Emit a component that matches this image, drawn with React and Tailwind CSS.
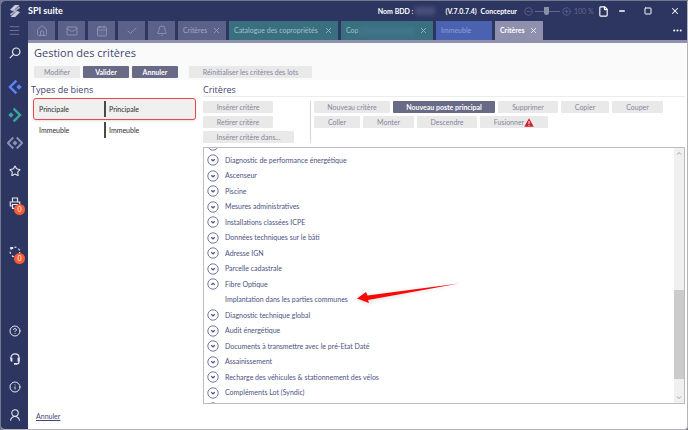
import React from 'react';
import { Home, Mail, CalendarDays, Check, Bell, X, Menu, Star, CircleHelp, Info, File, Minus, Square, Ellipsis, CircleMinus, CirclePlus } from 'lucide-react';
import clsx from 'clsx';

const shortcuts = [
  { label: 'Accueil', Icon: Home },
  { label: 'Messages', Icon: Mail },
  { label: 'Agenda', Icon: CalendarDays },
  { label: 'Tâches', Icon: Check },
  { label: 'Notifications', Icon: Bell },
];

const tabs = [
  { label: 'Critères', className: 'w-12 bg-[#5b6189] text-[#a3a6c2]', closable: true },
  { label: 'Catalogue des copropriétés', className: 'w-[109px] bg-[#3a6f80] text-[#9fc3cb]', closable: true },
  { label: 'Cop', className: 'w-[92px] bg-[#3a6f80] text-[#9fc3cb]', closable: true, masked: true },
  { label: 'Immeuble', className: 'w-14 bg-[#4a62b0] text-[#8fa0dc]' },
  { label: 'Critères', className: 'w-12 bg-[#8f90ae] text-white font-bold', closable: true },
];

const criteria = [
  'Diagnostics techniques',
  'Diagnostic de performance énergétique',
  'Ascenseur',
  'Piscine',
  'Mesures administratives',
  'Installations classées ICPE',
  'Données techniques sur le bâti',
  'Adresse IGN',
  'Parcelle cadastrale',
  'Fibre Optique',
  'Implantation dans les parties communes',
  'Diagnostic technique global',
  'Audit énergétique',
  'Documents à transmettre avec le pré-Etat Daté',
  'Assainissement',
  'Recharge des véhicules & stationnement des vélos',
  'Compléments Lot (Syndic)',
  '',
];

const Logo = () => (
  <svg viewBox="0 0 12 12" className="h-3 w-3" fill="#c9cbdc">
    <path d="M5.800 0H10.500L5 5H.8Z" />
    <path d="M9.900 1.300 11.200 2.900 5.200 6.800 1.200 5.200 6.500 4.200Z" opacity=".8" />
    <path d="M2.100 10.700.8 9.100 6.800 5.200 10.800 6.800 5.500 7.800Z" opacity=".8" />
    <path d="M6.200 12H1.500L7 7h4.200Z" />
  </svg>
);

const PaneIcon = ({ variant }) => (
  <svg viewBox="0 0 16 16" className="h-4 w-4" fill="none" strokeWidth="2.400">
    {variant === 'left' && (
      <g stroke="#5b86f5">
        <path d="M9.400 1.600 3 8l6.400 6.400" />
        <path d="M12 5.300 14.700 8 12 10.700 9.300 8Z" fill="#5b86f5" stroke="none" />
      </g>
    )}
    {variant === 'right' && (
      <g stroke="#38a89a">
        <path d="M6.600 1.600 13 8l-6.400 6.400" />
        <path d="M4 5.300 6.700 8 4 10.700 1.300 8Z" fill="#38a89a" stroke="none" />
      </g>
    )}
    {variant === 'both' && (
      <g stroke="#8d92b4">
        <path d="M6.300 2.500.9 8l5.400 5.500M9.700 2.500 15.100 8l-5.400 5.500" strokeWidth="1.900" />
        <path d="M8 5.500 10.500 8 8 10.500 5.500 8Z" fill="#8d92b4" stroke="none" />
      </g>
    )}
  </svg>
);

const SearchIcon = () => (
  <svg viewBox="0 0 12 12" className="h-3 w-3" fill="none" stroke="currentColor" strokeWidth="1.200">
    <circle cx="7.200" cy="4.700" r="3.700" />
    <path d="M4.500 7.400.8 11.200" />
  </svg>
);

const PrinterIcon = () => (
  <svg viewBox="0 0 12 12" className="h-3 w-3" fill="none" stroke="currentColor" strokeWidth="1.200">
    <path d="M3.500 5V1h5v4M3.500 9H1.300V5h9.400v4H8.500" />
    <path d="M3.500 7.500h5v3.800h-5Z" />
  </svg>
);

const HeadsetIcon = () => (
  <svg viewBox="0 0 12 12" className="h-3 w-3" fill="none" stroke="currentColor" strokeWidth="1.200">
    <path d="M2 6V4.600C2 2.300 3.800.9 6 .9s4 1.400 4 3.700V9c0 1.200-.8 1.900-2.200 1.900" />
    <path d="M1.400 4.800h2v4h-.8C1.900 8.800 1.400 8.300 1.400 7.600ZM8.600 4.800h2v2.800c0 .7-.5 1.200-1.200 1.200H8.600ZM5 10h3v1.700H5Z" fill="currentColor" stroke="none" />
  </svg>
);

const SideButton = ({ label, badge, children }) => (
  <button type="button" aria-label={label} className="relative flex h-7 w-full shrink-0 items-center justify-center text-[#e6e7ef]">
    {children}
    {badge !== undefined && (
      <span className="absolute right-[3px] bottom-[2px] flex h-[11px] w-[11px] items-center justify-center rounded-full bg-[#fb5c32] text-[7px] leading-none text-white">
        {badge}
      </span>
    )}
  </button>
);

const Button = ({ primary, className, children }) => (
  <button
    type="button"
    className={clsx(
      'flex h-3 shrink-0 items-center justify-center rounded-[1px] text-[7px] leading-none whitespace-nowrap',
      primary ? 'bg-[#686a86] font-bold text-white' : 'bg-[#e9e9e9] text-[#85869c]',
      className
    )}
  >
    {children}
  </button>
);

const Expander = ({ open }) => (
  <svg viewBox="0 0 12 12" className="h-3 w-3" fill="none" stroke="#4f5687">
    <circle cx="6" cy="6" r="5.200" strokeWidth=".8" />
    <path d={open ? 'M4.200 6.800 6 5.300l1.800 1.500' : 'M4.200 5.300 6 6.800l1.800-1.500'} strokeWidth="1.300" />
  </svg>
);

const Warning = () => (
  <svg viewBox="0 0 10 9" className="h-[9px] w-[10px]">
    <path d="M5 .2 9.800 8.800H.2Z" fill="#d3202f" />
    <path d="M5 3v3M5 6.900v1" stroke="#fff" strokeWidth=".9" />
  </svg>
);

const Sidebar = () => (
  <nav className="flex w-[27px] shrink-0 flex-col bg-[#2d3561]">
    <div className="flex h-5 items-center justify-center"><Logo /></div>
    <button type="button" aria-label="Menu" className="flex h-[18px] items-center justify-center text-[#7b80a5]">
      <Menu size={13} strokeWidth={1.5} />
    </button>
    <SideButton label="Rechercher"><SearchIcon /></SideButton>
    <div className="mt-[6px] flex flex-col">
      <SideButton label="Gérance"><PaneIcon variant="left" /></SideButton>
      <SideButton label="Copropriété"><PaneIcon variant="right" /></SideButton>
      <SideButton label="Transaction"><PaneIcon variant="both" /></SideButton>
      <SideButton label="Favoris"><Star size={12} strokeWidth={2.2} /></SideButton>
    </div>
    <div className="mt-1 flex flex-col gap-[21px]">
      <SideButton label="Impressions" badge={0}><PrinterIcon /></SideButton>
      <SideButton label="Traitements" badge={0}>
        <svg viewBox="0 0 12 12" className="h-3 w-3" fill="none" stroke="currentColor" strokeWidth="1.200">
          <circle cx="6" cy="6" r="4.800" strokeDasharray="2 2.300" />
          <path d="M1.200 1h3v2h-3z" fill="currentColor" stroke="none" />
        </svg>
      </SideButton>
    </div>
    <div className="mt-auto flex flex-col">
      <SideButton label="Aide"><CircleHelp size={12} strokeWidth={2} /></SideButton>
      <SideButton label="Support"><HeadsetIcon /></SideButton>
      <SideButton label="Informations"><Info size={12} strokeWidth={2} /></SideButton>
      <SideButton label="Compte">
        <svg viewBox="0 0 12 12" className="h-3 w-3" fill="none" stroke="currentColor" strokeWidth="1.100">
          <circle cx="6" cy="4" r="3.200" />
          <path d="M1.500 11.600C1.900 9 3.600 7.500 6 7.500s4.100 1.500 4.500 4.100" />
        </svg>
      </SideButton>
    </div>
  </nav>
);

const TitleBar = () => (
  <div className="flex h-5 items-center text-[7px] text-white">
    <span className="text-[9px] font-bold">SPI suite</span>
    <div className="ml-auto flex items-center font-bold whitespace-nowrap">
      <span>Nom BDD :</span>
      <span className="ml-[2px] h-2 w-5 bg-[#4a517b] blur-[2px]"></span>
      <span className="ml-[10px]">(V.7.0.7.4)</span>
      <span className="ml-1">Concepteur</span>
    </div>
    <div className="ml-[7px] flex items-center text-[#62688f]">
      <button type="button" aria-label="Zoom arrière"><CircleMinus size={9} strokeWidth={2} /></button>
      <input
        type="range"
        aria-label="Zoom"
        defaultValue={45}
        className="mx-[2px] h-2 w-[25px] appearance-none bg-transparent [&::-webkit-slider-runnable-track]:h-px [&::-webkit-slider-runnable-track]:bg-[#62688f] [&::-webkit-slider-thumb]:-mt-1 [&::-webkit-slider-thumb]:h-2 [&::-webkit-slider-thumb]:w-[5px] [&::-webkit-slider-thumb]:appearance-none [&::-webkit-slider-thumb]:rounded-b-full [&::-webkit-slider-thumb]:bg-[#8b8fa9]"
      />
      <button type="button" aria-label="Zoom avant"><CirclePlus size={9} strokeWidth={2} /></button>
      <span className="ml-[3px] w-5 whitespace-nowrap">100 %</span>
    </div>
    <button type="button" aria-label="Nouveau document" className="ml-1"><File size={11} strokeWidth={2.5} /></button>
    <div className="ml-[9px] flex items-center gap-[18px] pr-[7px]">
      <button type="button" aria-label="Réduire"><Minus size={8} strokeWidth={4} /></button>
      <button type="button" aria-label="Agrandir"><Square size={8} strokeWidth={3} /></button>
      <button type="button" aria-label="Fermer"><X size={10} strokeWidth={2.5} /></button>
    </div>
  </div>
);

const TabBar = () => (
  <div className="flex h-[22px] items-stretch gap-[3px] border-b-[3px] border-[#8f90ae] text-[7px]">
    {shortcuts.map(({ label, Icon }) => (
      <button key={label} type="button" aria-label={label} className="flex w-[27px] items-center justify-center bg-[#5b6189] text-[#9194b3]">
        <Icon size={12} strokeWidth={1.8} />
      </button>
    ))}
    {tabs.map((tab, index) => (
      <div key={index} className={clsx('flex shrink-0 items-center justify-between px-[5px]', tab.className)}>
        <button type="button" className="flex items-center whitespace-nowrap">
          {tab.label}
          {tab.masked && <span className="h-2 w-14 bg-[#42758a] blur-[2px]"></span>}
        </button>
        {tab.closable && (
          <button type="button" aria-label={`Fermer ${tab.label}`}><X size={9} strokeWidth={2} /></button>
        )}
      </div>
    ))}
    <button type="button" aria-label="Plus" className="mr-1 ml-auto flex items-center text-white"><Ellipsis size={11} strokeWidth={2.5} /></button>
  </div>
);

const TypeRow = ({ selected }) => {
  const name = selected ? 'Principale' : 'Immeuble';
  return (
    <button
      type="button"
      className={clsx(
        'flex items-center rounded-[3px] border text-left text-[7px] text-[#2b2b2b]',
        selected ? 'h-[22px] border-[#ee4548] bg-[#f0f0f0] shadow-sm' : 'h-5 border-transparent'
      )}
    >
      <span className="w-[70px] pl-[5px]">{name}</span>
      <span className="flex h-4 items-center border-l-2 border-[#4a4a4a] pl-[3px]">{name}</span>
    </button>
  );
};

const Arrow = () => (
  <svg viewBox="0 0 106 24" className="absolute -top-4 left-full ml-2 h-6 w-[106px] drop-shadow-sm" fill="#fa0707">
    <path d="M1 18.500 10 12 11.500 15.500 103 3.500 12 20 13 23Z" />
  </svg>
);

const CriteriaTree = () => (
  <div className="flex min-h-0 flex-1 overflow-hidden border border-[#bcbcc2]">
    <ul className="-mt-[11px] -mb-[13px] flex flex-1 flex-col pl-[3px] text-[7px] text-[#4b5282]">
      {criteria.map((name) => {
        const child = name.startsWith('Implantation');
        return (
          <li key={name} className="flex flex-1 items-center gap-[6px]">
            {child ? (
              <span className="w-3"></span>
            ) : (
              <button type="button" aria-label={`Déplier ${name}`}><Expander open={name === 'Fibre Optique'} /></button>
            )}
            <span className="relative leading-none whitespace-nowrap">
              {name}
              {child && <Arrow />}
            </span>
          </li>
        );
      })}
    </ul>
    <div className="flex w-[10px] flex-col items-center bg-[#f0f0f0] text-[#a0a0a0]">
      <svg viewBox="0 0 10 10" className="h-[10px] w-[10px]" fill="none" stroke="currentColor"><path d="M3 6.500 5 4.500l2 2" /></svg>
      <div className="grow-[132]"></div>
      <div className="w-full grow-[89] bg-[#cbcbcb]"></div>
      <div className="grow-[14]"></div>
      <svg viewBox="0 0 10 10" className="h-[10px] w-[10px]" fill="none" stroke="currentColor"><path d="M3 3.500 5 5.500l2-2" /></svg>
    </div>
  </div>
);

const App = () => (
  <div className="h-screen bg-[#73778f] pt-px pl-px font-['Lato','Open_Sans',sans-serif]">
    <div className="flex h-full overflow-hidden rounded-tl-[4px] rounded-b-[4px] border-r border-b border-[#b5b5b9] bg-white">
      <Sidebar />
      <div className="flex min-w-0 flex-1 flex-col">
        <header className="bg-[#2d3561]">
          <TitleBar />
          <TabBar />
        </header>

        <section className="bg-[#fafafa] px-[6px] pt-[3px] pb-[2px]">
          <h1 className="font-['Open_Sans',sans-serif] text-[11px] leading-[14px] text-[#3f4672]">Gestion des critères</h1>
          <div className="mt-[6px] flex gap-[3px]">
            <Button className="w-[46px]">Modifier</Button>
            <Button primary className="w-[46px]">Valider</Button>
            <Button primary className="w-[46px]">Annuler</Button>
            <Button className="ml-2 w-[123px]">Réinitialiser les critères des lots</Button>
          </div>
        </section>

        <main className="flex min-h-0 flex-1">
          <section className="flex w-[175px] shrink-0 flex-col pt-1 pr-[7px] pl-[3px]">
            <h2 className="font-['Open_Sans',sans-serif] text-[9px] leading-3 text-[#3f4672]">Types de biens</h2>
            <div className="mt-[2px] flex flex-col pl-[2px]">
              <TypeRow selected />
              <TypeRow />
            </div>
          </section>

          <section className="flex min-w-0 flex-1 flex-col pt-1 pr-[2px]">
            <h2 className="border-b border-[#ececec] font-['Open_Sans',sans-serif] text-[9px] leading-3 text-[#3f4672]">Critères</h2>
            <div className="my-1 flex gap-[3px]">
              <div className="flex w-[108px] shrink-0 flex-col gap-[3px] border-r border-[#d4d4d4]">
                <Button className="w-[70px]">Insérer critère</Button>
                <Button className="w-[70px]">Retirer critère</Button>
                <Button className="w-[91px]">Insérer critère dans...</Button>
              </div>
              <div className="flex flex-col gap-[3px]">
                <div className="flex gap-[3px]">
                  <Button className="w-[76px]">Nouveau critère</Button>
                  <Button primary className="w-[102px]">Nouveau poste principal</Button>
                  <Button className="w-[60px]">Supprimer</Button>
                  <Button className="w-12">Copier</Button>
                  <Button className="w-[51px]">Couper</Button>
                </div>
                <div className="flex gap-[3px]">
                  <Button className="w-[46px]">Coller</Button>
                  <Button className="w-[51px]">Monter</Button>
                  <Button className="w-[60px]">Descendre</Button>
                  <Button className="w-[68px]">Fusionner<Warning /></Button>
                </div>
              </div>
            </div>
            <CriteriaTree />
          </section>
        </main>

        <footer className="flex h-[25px] items-center px-2 text-[7px] text-[#3f4672]">
          <a href="#annuler" className="underline">Annuler</a>
        </footer>
      </div>
    </div>
  </div>
);

export default App;
